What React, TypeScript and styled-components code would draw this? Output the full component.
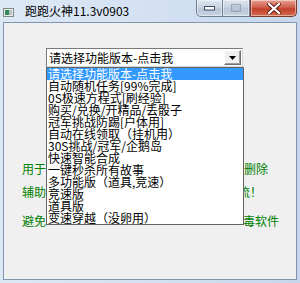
import React from 'react';
import styled, { createGlobalStyle } from 'styled-components';

const GlobalStyle = createGlobalStyle`
  html, body {
    margin: 0;
    padding: 0;
  }
  body {
    width: 300px;
    height: 283px;
    overflow: hidden;
    font-family: "Noto Sans CJK SC", "Liberation Sans", sans-serif;
  }
`;

const options = [
  '请选择功能版本-点击我',
  '自动随机任务[99%完成]',
  '0S极速方程式[刷经验]',
  '购买/兑换/开精品/丢骰子',
  '冠军挑战防踢[户体用]',
  '自动在线领取（挂机用）',
  '30S挑战/冠军/企鹅岛',
  '快速智能合成',
  '一键秒杀所有故事',
  '多功能版（道具,竞速）',
  '竞速版',
  '道具版',
  '变速穿越（没卵用）',
];

const notes = [
  { left: '用于', right: '删除', shift: 0, gap: 95 },
  { left: '辅助', right: '流！', shift: -6, gap: 9 },
  { left: '避免', right: '毒软件', shift: -1, gap: 15 },
];

function App() {
  return (
    <Window>
      <GlobalStyle />
      <TitleBar>
        <AppIcon width="11" height="9" viewBox="0 0 11 9">
          <rect x="0.5" y="0.5" width="10" height="8" fill="#e8ece8" stroke="#7d8a86" />
          <rect x="2" y="2" width="4" height="5" fill="#2f8a5a" />
          <rect x="6" y="2" width="3" height="5" fill="#b9c4c0" />
        </AppIcon>
        <Title>跑跑火神11.3v0903</Title>
        <CaptionButtons>
          <CaptionButton $kind="min">
            <svg width="11" height="5" viewBox="0 0 11 5">
              <rect x="0.5" y="0.5" width="10" height="3.5" fill="#fff" stroke="#3b4a60" />
            </svg>
          </CaptionButton>
          <CaptionButton $kind="max">
            <svg width="10" height="8" viewBox="0 0 10 8">
              <rect x="0.5" y="0.5" width="9" height="7" fill="none" stroke="#98a6b8" />
              <rect x="2" y="2.5" width="6" height="4" fill="none" stroke="#aebacb" />
            </svg>
          </CaptionButton>
          <CaptionButton $kind="close">
            <svg width="14" height="11" viewBox="0 0 14 11">
              <path d="M2 1 L12 10 M12 1 L2 10" stroke="#5a1a12" strokeWidth="4" strokeLinecap="square" />
              <path d="M2 1 L12 10 M12 1 L2 10" stroke="#fff" strokeWidth="2.2" strokeLinecap="square" />
            </svg>
          </CaptionButton>
        </CaptionButtons>
      </TitleBar>

      <Client>
        <Combo>
          <ComboBox>
            <ComboText>请选择功能版本-点击我</ComboText>
            <ArrowButton>
              <svg width="7" height="4" viewBox="0 0 7 4">
                <path d="M0 0 H7 L3.5 4 Z" fill="#000" />
              </svg>
            </ArrowButton>
          </ComboBox>
          <DropList>
            {options.map((opt, i) => (
              <Option key={opt} $selected={i === 0}>{opt}</Option>
            ))}
          </DropList>
        </Combo>

        <Notes>
          {notes.map(n => (
            <NoteRow key={n.left} $gap={n.gap}>
              <span>{n.left}</span>
              <NoteRight $shift={n.shift}>{n.right}</NoteRight>
            </NoteRow>
          ))}
        </Notes>
      </Client>
    </Window>
  );
}

const Window = styled.div`
  width: 300px;
  height: 283px;
  box-sizing: border-box;
  display: flex;
  flex-direction: column;
  padding: 0 3px 3px 3px;
  background: linear-gradient(to right, #dde8f5 0%, #d3e1f2 50%, #c6d7ed 100%);
`;

const TitleBar = styled.div`
  height: 22px;
  flex-shrink: 0;
  display: flex;
  align-items: flex-start;
`;

const AppIcon = styled.svg`
  margin-top: 8px;
  flex-shrink: 0;
`;

const Title = styled.span`
  margin: 4px 0 0 11px;
  font-size: 12px;
  line-height: 14px;
  color: #000;
  white-space: nowrap;
`;

const CaptionButtons = styled.div`
  margin-left: auto;
  display: flex;
  height: 17px;
`;

const CaptionButton = styled.div<{ $kind: 'min' | 'max' | 'close' }>`
  box-sizing: border-box;
  height: 17px;
  width: ${p => (p.$kind === 'close' ? 47 : 27)}px;
  display: flex;
  align-items: center;
  justify-content: center;
  border: 1px solid ${p => (p.$kind === 'close' ? '#7a3a30' : '#6e7e95')};
  border-top: none;
  border-left: ${p => (p.$kind === 'max' ? 'none' : undefined)};
  border-radius: ${p =>
    p.$kind === 'min' ? '0 0 0 5px' : p.$kind === 'close' ? '0 0 5px 0' : '0'};
  background: ${p =>
    p.$kind === 'close'
      ? 'linear-gradient(#e8a093 0%, #d0604c 45%, #c2412b 55%, #d46a4e 100%)'
      : 'linear-gradient(#dde5ef 0%, #c9d4e2 45%, #b8c6d8 55%, #c7d3e3 100%)'};
  box-shadow: inset 0 0 0 1px rgba(255, 255, 255, 0.45);
`;

const Client = styled.div`
  flex: 1;
  position: relative;
  display: flex;
  flex-direction: column;
  background: #f0f0f0;
  border: 1px solid #8295ae;
`;

const Combo = styled.div`
  position: relative;
  margin: 25px 0 0 42px;
  width: 197px;
`;

const ComboBox = styled.div`
  box-sizing: border-box;
  height: 19px;
  display: flex;
  align-items: center;
  background: #fff;
  border: 1px solid #7a7a7a;
  border-right-color: #d8d8d8;
  border-bottom-color: #d8d8d8;
`;

const ComboText = styled.span`
  flex: 1;
  padding-left: 2px;
  font-size: 12px;
  line-height: 17px;
  color: #000;
  white-space: nowrap;
`;

const ArrowButton = styled.div`
  box-sizing: border-box;
  width: 17px;
  height: 15px;
  margin-right: 1px;
  display: flex;
  align-items: center;
  justify-content: center;
  background: #f0f0f0;
  border: 1px solid;
  border-color: #ffffff #6f6f6f #6f6f6f #ffffff;
  box-shadow: inset -1px -1px 0 #a0a0a0;
`;

const DropList = styled.div`
  position: absolute;
  top: 19px;
  left: 0;
  width: 198px;
  box-sizing: border-box;
  background: #fff;
  border: 1px solid #646464;
  z-index: 2;
`;

const Option = styled.div<{ $selected?: boolean }>`
  height: 12px;
  padding-left: 1px;
  font-size: 12px;
  line-height: 12px;
  white-space: nowrap;
  color: ${p => (p.$selected ? '#fff' : '#000')};
  background: ${p => (p.$selected ? '#3399ff' : 'transparent')};
`;

const Notes = styled.div`
  display: flex;
  flex-direction: column;
  padding-left: 18px;
`;

const NoteRow = styled.div<{ $gap: number }>`
  margin-top: ${p => p.$gap}px;
  display: grid;
  grid-template-columns: 222px auto;
  font-size: 12px;
  line-height: 14px;
  color: #008000;
  white-space: nowrap;
`;

const NoteRight = styled.span<{ $shift: number }>`
  margin-left: ${p => p.$shift}px;
`;

export default App;
